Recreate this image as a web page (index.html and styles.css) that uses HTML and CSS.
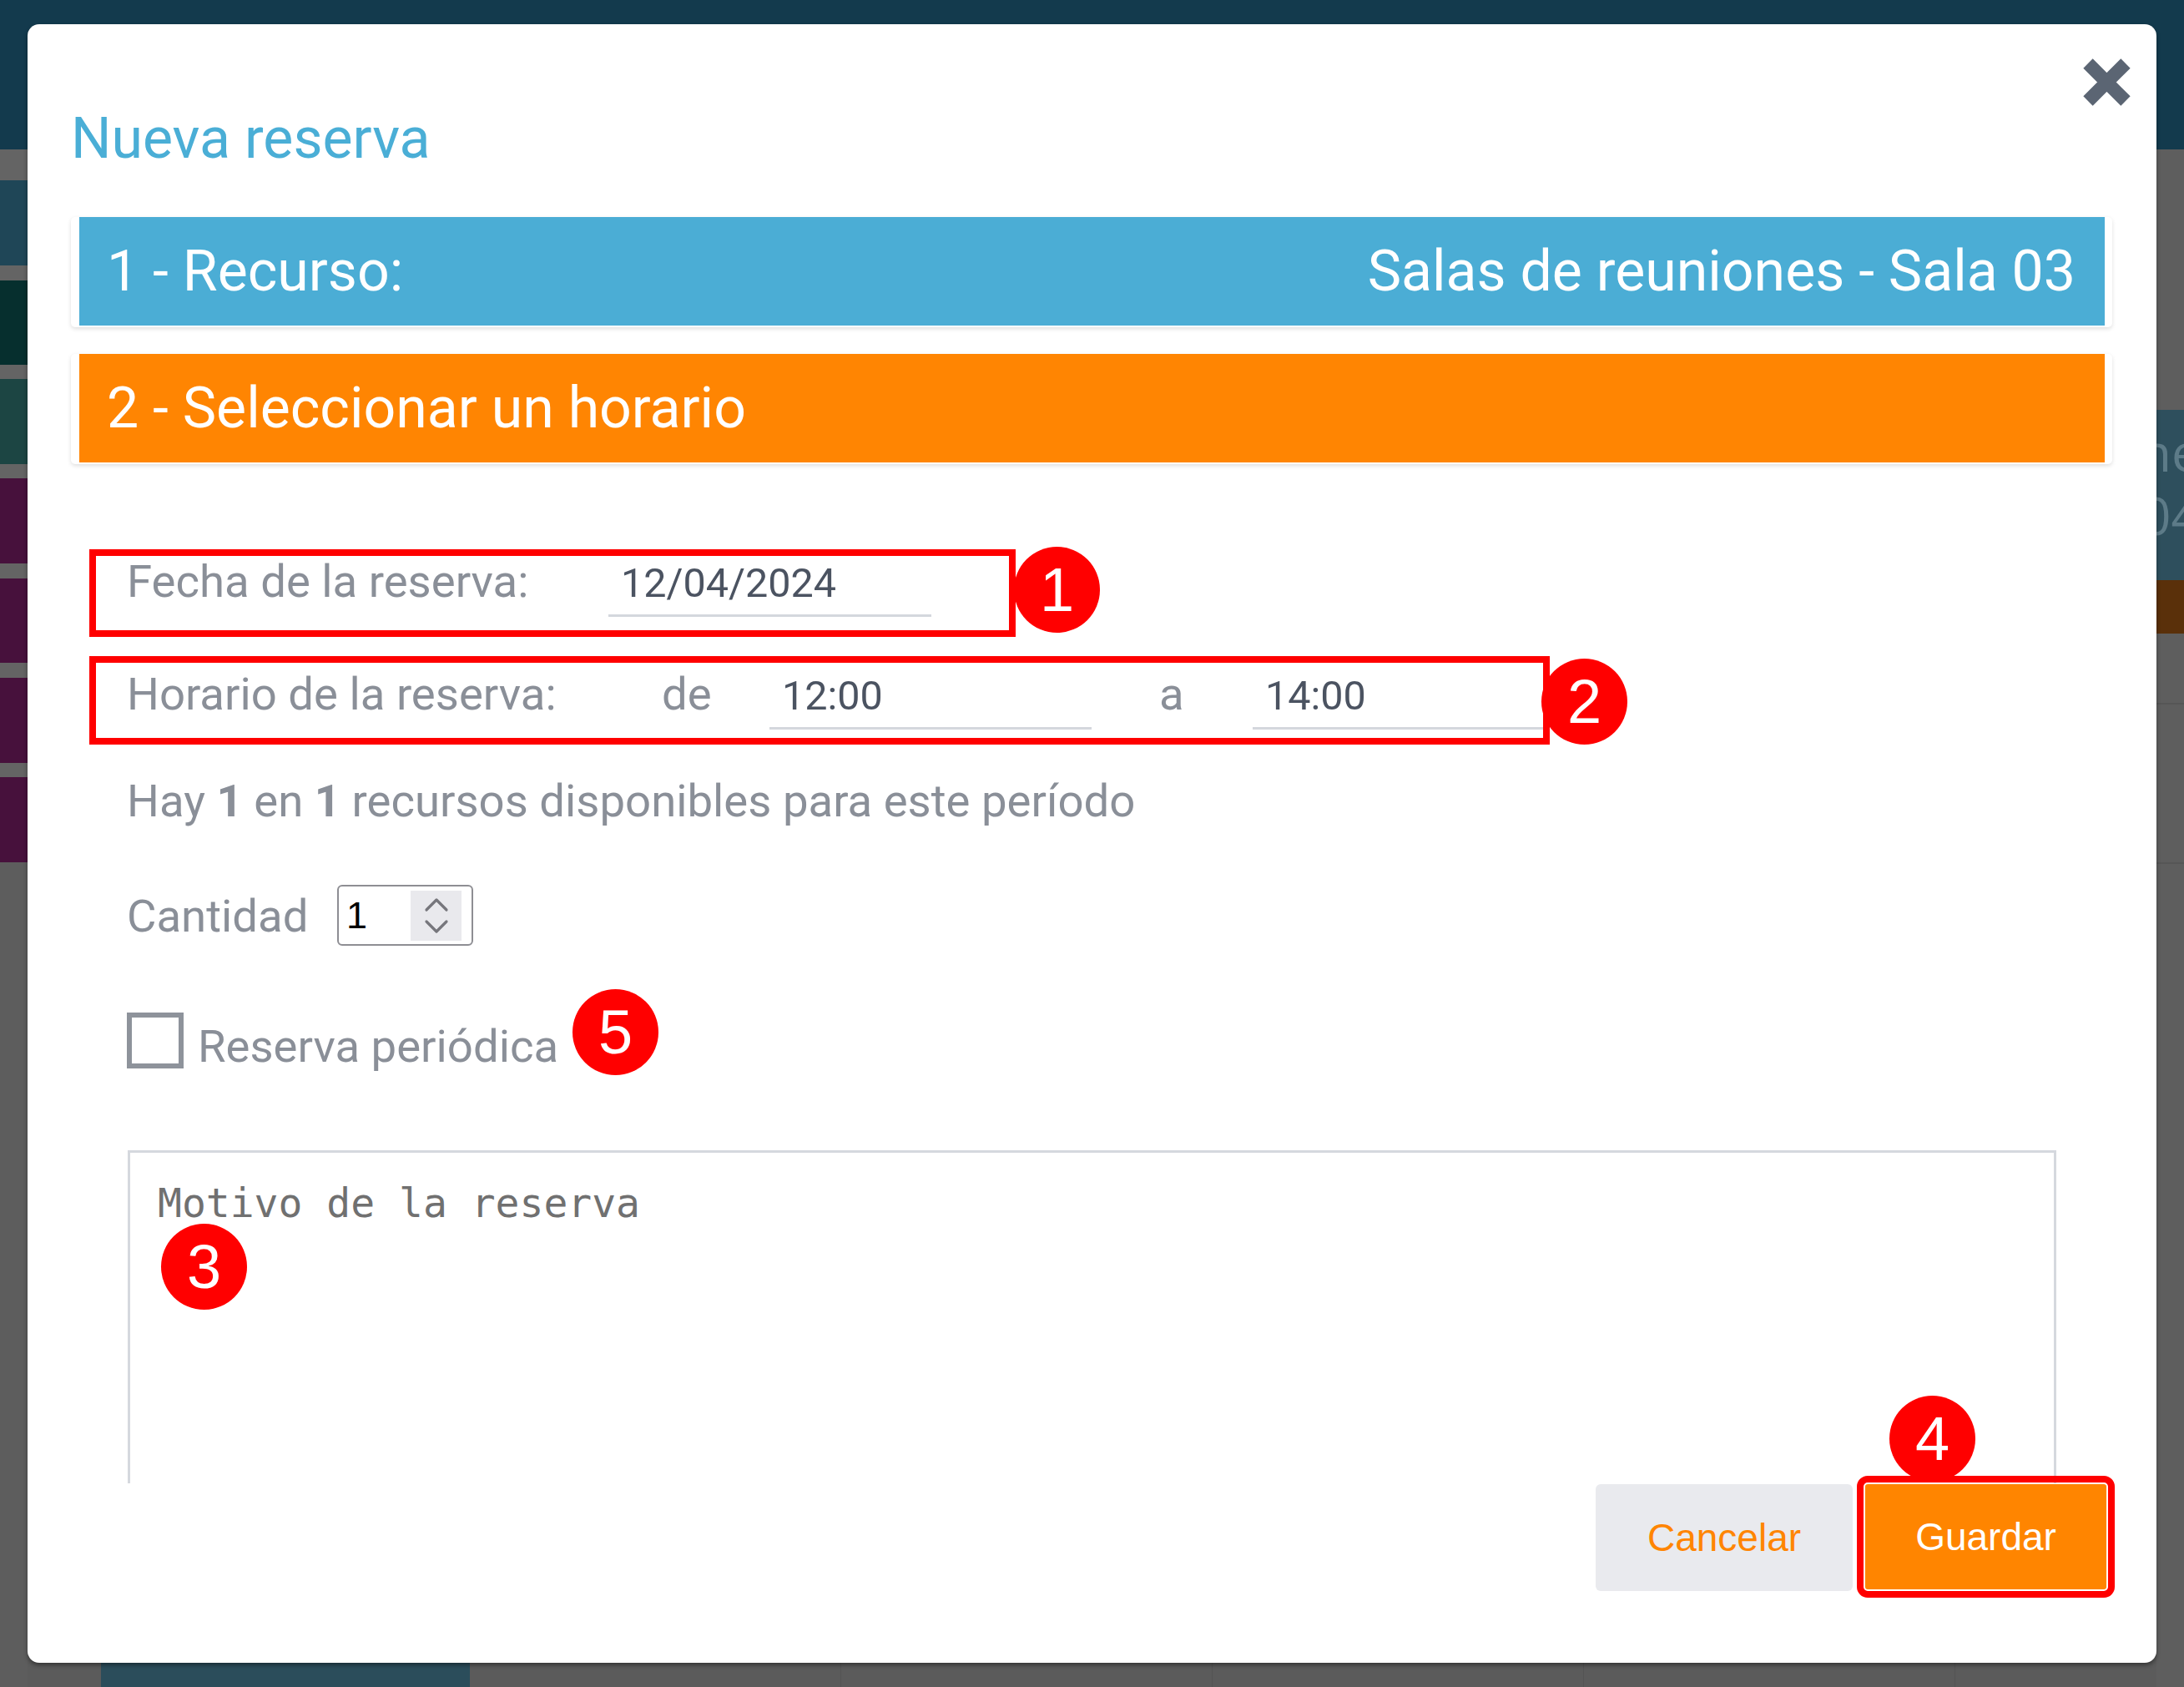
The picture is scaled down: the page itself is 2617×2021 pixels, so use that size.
FILE: index.html
```html
<!DOCTYPE html>
<html lang="es">
<head>
<meta charset="utf-8">
<title>Nueva reserva</title>
<link rel="stylesheet" href="styles.css">
</head>
<body>
<div class="page">
  <div class="topbar"></div>
  <div class="page-main">
    <div class="side">
      <div class="stripe sep h37"></div>
      <div class="stripe c-navy h102"></div>
      <div class="stripe sep h18"></div>
      <div class="stripe c-teal-dark h101"></div>
      <div class="stripe sep h17"></div>
      <div class="stripe c-teal h102"></div>
      <div class="stripe sep h17"></div>
      <div class="stripe c-purple h102"></div>
      <div class="stripe sep h18"></div>
      <div class="stripe c-purple h101"></div>
      <div class="stripe sep h18"></div>
      <div class="stripe c-purple h102"></div>
      <div class="stripe sep h17"></div>
      <div class="stripe c-purple h102"></div>
      <div class="stripe rest"></div>
    </div>
    <div class="page-center">
      <div class="page-bottom">
        <div class="cell cell-gap"></div>
        <div class="cell cell-teal"></div>
        <div class="cell cell-w444"></div>
        <div class="cell cell-w445 cell-line"></div>
        <div class="cell cell-w445 cell-line"></div>
        <div class="cell cell-w445 cell-line"></div>
        <div class="cell rest cell-line"></div>
      </div>
    </div>
    <div class="side side-right">
      <div class="stripe gray h312"></div>
      <div class="stripe c-slate h204">
        <div class="slate-text slate-a">ne</div>
        <div class="slate-text slate-b">04</div>
      </div>
      <div class="stripe c-brown h64"></div>
      <div class="stripe gray h83"></div>
      <div class="stripe gray line-top h191"></div>
      <div class="stripe gray line-top rest"></div>
    </div>
  </div>
</div>

<div class="modal">
  <div class="modal-body">
    <button class="close" type="button" aria-label="Cerrar">
      <svg width="57" height="57" viewBox="0 0 57 57"><path d="M6 6 L51 51 M51 6 L6 51" stroke="#5b6573" stroke-width="16" fill="none"/></svg>
    </button>
    <h1 class="title">Nueva reserva</h1>

    <div class="card">
      <div class="panel panel-blue">
        <span>1 - Recurso:</span>
        <span>Salas de reuniones - Sala 03</span>
      </div>
    </div>
    <div class="card card-second">
      <div class="panel panel-orange">
        <span>2 - Seleccionar un horario</span>
      </div>
    </div>

    <div class="form">
      <div class="field-box row-date">
        <label class="label label-date">Fecha de la reserva:</label>
        <input class="line-input w387" type="text" value="12/04/2024">
        <span class="badge badge-1">1</span>
      </div>
      <div class="field-box row-time">
        <label class="label label-time">Horario de la reserva:</label>
        <span class="label conj-de">de</span>
        <input class="line-input w386" type="text" value="12:00">
        <span class="label conj-a">a</span>
        <input class="line-input w348" type="text" value="14:00">
        <span class="badge badge-2">2</span>
      </div>

      <p class="availability">Hay <strong>1</strong> en <strong>1</strong> recursos disponibles para este período</p>

      <div class="qty-row">
        <span class="label qty-label">Cantidad</span>
        <div class="spin">
          <span class="spin-value">1</span>
          <span class="spin-arrows">
            <svg width="61" height="60" viewBox="0 0 61 60"><path d="M19 23 L31 11 L43 23 M19 37 L31 49 L43 37" stroke="#76767c" stroke-width="3.2" fill="none" stroke-linecap="round" stroke-linejoin="round"/></svg>
          </span>
        </div>
      </div>

      <div class="check-row">
        <span class="checkbox"></span>
        <span class="check-label">Reserva periódica</span>
        <span class="badge badge-5">5</span>
      </div>

      <div class="textarea-wrap">
        <textarea class="reason" placeholder="Motivo de la reserva"></textarea>
        <span class="badge badge-3">3</span>
      </div>
    </div>
  </div>

  <div class="modal-footer">
    <button class="btn btn-cancel" type="button">Cancelar</button>
    <button class="btn btn-save" type="button">Guardar<span class="badge badge-4">4</span></button>
  </div>
</div>
</body>
</html>
```

FILE: styles.css
```css
* { box-sizing: border-box; }
html, body { margin: 0; padding: 0; }
body {
  width: 2617px;
  height: 2021px;
  overflow: hidden;
  background: #5b5b5b;
  font-family: Roboto, "Liberation Sans", sans-serif;
  position: relative;
}

/* ---------- page behind the dialog ---------- */
.page { height: 2021px; display: flex; flex-direction: column; }
.topbar { height: 179px; flex: none; background: #133a4d; }
.page-main { flex: 1; display: flex; min-height: 0; }
.side { width: 33px; flex: none; display: flex; flex-direction: column; overflow: hidden; background: #5d5d5d; }
.stripe { flex: none; }
.rest { flex: 1; }
.sep { background: #646464; }
.gray { background: #5e5e5e; }
.c-navy { background: #1f4657; }
.c-teal-dark { background: #062f2e; }
.c-teal { background: #1c4543; }
.c-purple { background: #47113c; }
.c-slate { background: #2e4f5d; padding-top: 12px; overflow: hidden; }
.c-brown { background: #5a300a; }
.line-top { border-top: 2px solid #565656; }
.h17 { height: 17px; } .h18 { height: 18px; } .h37 { height: 37px; }
.h64 { height: 64px; } .h83 { height: 83px; }
.h101 { height: 101px; } .h102 { height: 102px; }
.h191 { height: 191px; } .h204 { height: 204px; } .h312 { height: 312px; }
.slate-text {
  font-family: "Open Sans", sans-serif;
  font-size: 62px;
  line-height: 76px;
  color: #5d7b88;
  white-space: nowrap;
}
.slate-a { margin-left: -20px; }
.slate-b { margin-left: -18px; }

.page-center { flex: 1; display: flex; flex-direction: column; justify-content: flex-end; }
.page-bottom { height: 29px; display: flex; }
.cell { flex: none; }
.cell-gap { width: 88px; }
.cell-teal { width: 442px; background: #2b4d5b; }
.cell-w444 { width: 444px; }
.cell-w445 { width: 445px; }
.cell-line { border-left: 1px solid #545454; }

/* ---------- dialog ---------- */
.modal {
  position: absolute;
  left: 33px;
  top: 29px;
  width: 2551px;
  height: 1963px;
  background: #fff;
  border-radius: 14px;
  box-shadow: 0 3px 5px rgba(0, 0, 0, 0.4);
  display: flex;
  flex-direction: column;
}
.modal-body {
  flex: 1;
  min-height: 0;
  overflow: hidden;
  position: relative;
  padding: 97px 53px 0 52px;
  border-radius: 14px 14px 0 0;
}
.close {
  position: absolute;
  top: 41px;
  right: 31px;
  width: 57px;
  height: 57px;
  padding: 0;
  border: 0;
  background: none;
  display: block;
}
.close svg { display: block; }
.title {
  margin: 0;
  font-size: 68px;
  font-weight: 400;
  line-height: 80px;
  color: #4aaed6;
}

.card {
  margin-top: 54px;
  background: #fff;
  padding: 0 9px 2px 10px;
  border-radius: 5px;
  box-shadow: 0 2px 5px rgba(0, 0, 0, 0.13);
}
.card-second { margin-top: 32px; }
.panel {
  height: 130px;
  display: flex;
  align-items: center;
  justify-content: space-between;
  padding: 0 35px 0 33px;
  font-size: 68px;
  color: #fff;
  white-space: nowrap;
}
.panel-blue { background: #4badd5; }
.panel-orange { background: #ff8502; }

/* ---------- form ---------- */
.form { margin-top: 102px; padding-left: 67px; }
.label {
  flex: none;
  font-size: 54.5px;
  line-height: 60px;
  color: #8a8f98;
  white-space: nowrap;
}
.field-box {
  position: relative;
  margin-left: -45px;
  border: 8px solid #ff0000;
  display: flex;
  align-items: flex-start;
  padding-left: 37px;
}
.row-date { width: 1110px; height: 105px; }
.row-time { width: 1750px; height: 106px; margin-top: 23px; padding-top: 7px; }
.label-date { width: 577px; }
.label-time { width: 641px; }
.conj-de { width: 129px; }
.conj-a { width: 112px; margin-left: 81px; }
.line-input {
  flex: none;
  margin-top: 4px;
  height: 69px;
  padding: 0 0 9px 15px;
  border: 0;
  border-bottom: 3px solid #d4d7dd;
  border-radius: 0;
  background: transparent;
  font-family: Roboto, sans-serif;
  font-size: 48.5px;
  line-height: 57px;
  color: #4b5361;
  outline: none;
}
.w387 { width: 387px; }
.w386 { width: 386px; }
.w348 { width: 348px; }

.badge {
  width: 103px;
  height: 103px;
  border-radius: 50%;
  background: #ff0000;
  color: #fff;
  font-family: "Liberation Sans", Arial, sans-serif;
  font-size: 74px;
  font-weight: 400;
  line-height: 1;
  display: flex;
  align-items: center;
  justify-content: center;
  flex: none;
}
.badge-1 { position: absolute; left: 1100px; top: -11px; }
.badge-2 { position: absolute; left: 1732px; top: -5px; }
.badge-3 { position: absolute; left: 40px; top: 88px; }
.badge-4 { position: absolute; left: 29px; top: -106px; }
.badge-5 { position: relative; top: -10px; margin-left: 17px; }

.availability {
  margin: 35px 0 0;
  font-size: 54.5px;
  line-height: 64px;
  color: #8a8f98;
}
.availability strong { font-weight: 700; }

.qty-row { margin-top: 69px; height: 73px; display: flex; align-items: center; }
.qty-label { width: 252px; line-height: 64px; }
.spin {
  width: 163px;
  height: 73px;
  border: 2px solid #8e8e93;
  border-radius: 6px;
  display: flex;
  align-items: center;
  padding: 0 12px 0 9px;
}
.spin-value {
  flex: 1;
  font-family: "Liberation Sans", Arial, sans-serif;
  font-size: 45px;
  line-height: 1;
  color: #000;
}
.spin-arrows { width: 61px; height: 60px; background: #e9e9ed; display: block; }
.spin-arrows svg { display: block; }

.check-row { margin-top: 62px; height: 103px; display: flex; align-items: center; }
.checkbox {
  width: 68px;
  height: 67px;
  border: 6px solid #8e939b;
  background: #fff;
  margin-right: 17px;
  flex: none;
}
.check-label {
  font-size: 54.5px;
  line-height: 55px;
  padding-top: 14px;
  color: #8a8f98;
  white-space: nowrap;
}

.textarea-wrap { position: relative; margin-top: 80px; margin-left: 1px; }
.reason {
  display: block;
  width: 2311px;
  height: 600px;
  border: 3px solid #d5d8de;
  border-radius: 0;
  padding: 32px 33px;
  font-family: "DejaVu Sans Mono", "Liberation Mono", monospace;
  font-size: 48px;
  line-height: normal;
  color: #444;
  resize: none;
  outline: none;
}
.reason::placeholder { color: #707070; opacity: 1; }

/* ---------- footer ---------- */
.modal-footer {
  flex: none;
  height: 215px;
  display: flex;
  justify-content: flex-end;
  align-items: flex-start;
  gap: 15px;
  padding: 1px 60px 0 0;
}
.btn {
  height: 128px;
  border: 0;
  border-radius: 6px;
  font-family: "Liberation Sans", Arial, sans-serif;
  font-size: 46px;
  padding: 0;
}
.btn-cancel { width: 308px; background: #e9eaee; color: #ff8500; }
.btn-save {
  position: relative;
  width: 289px;
  height: 126px;
  background: #ff8500;
  color: #fff;
  border-radius: 3px;
  outline: 8px solid #ff0000;
  outline-offset: 2px;
}
```
